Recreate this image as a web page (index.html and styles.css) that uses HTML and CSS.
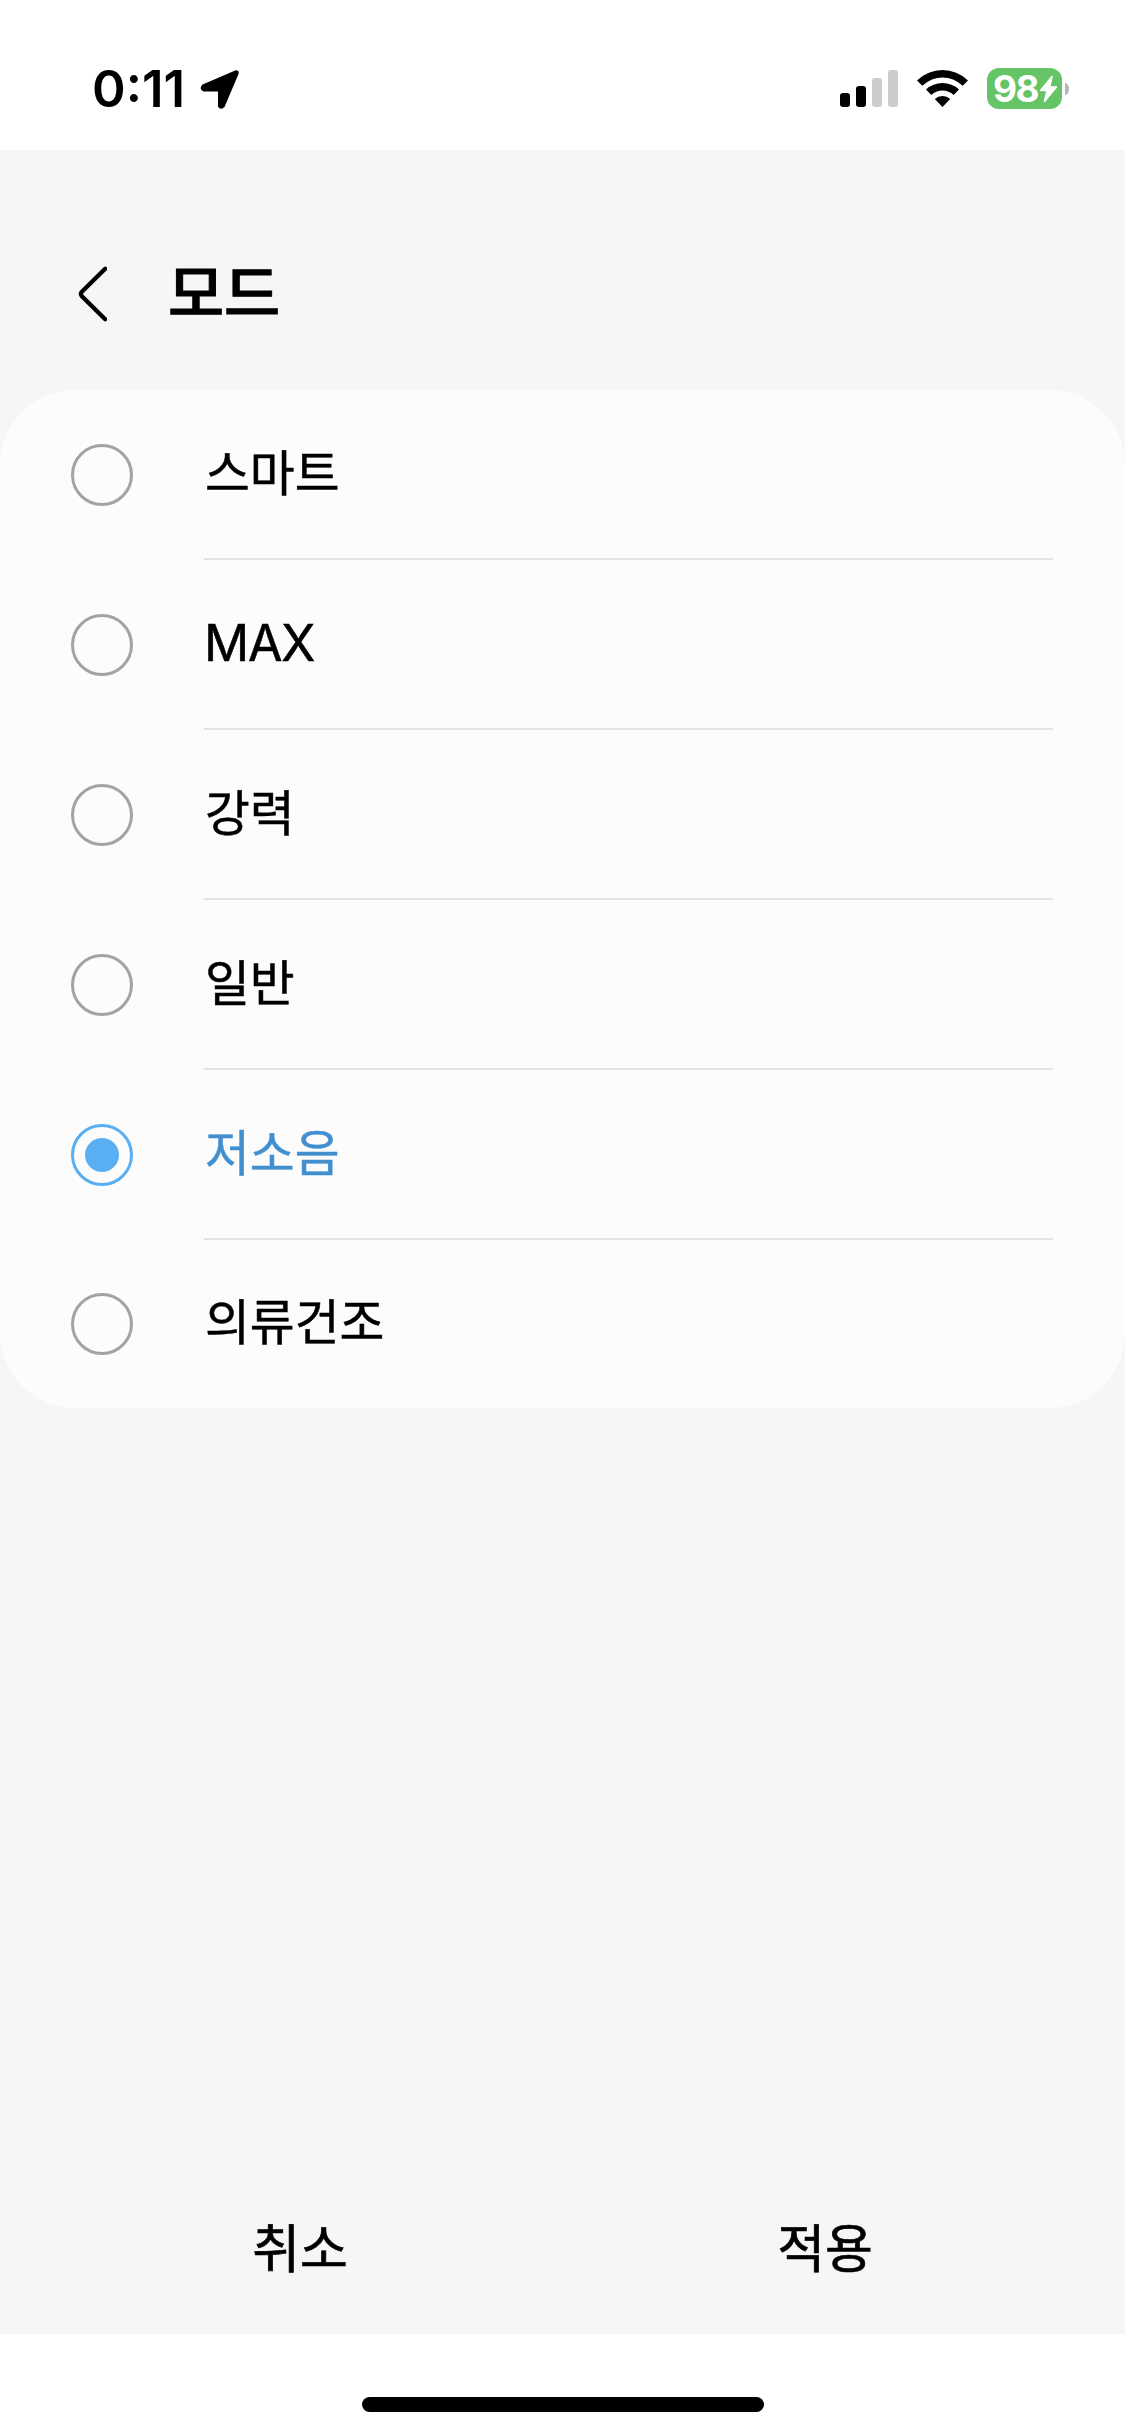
FILE: index.html
```html
<!DOCTYPE html>
<html lang="ko">
<head>
<meta charset="utf-8">
<title>모드</title>
<link rel="stylesheet" href="styles.css">
</head>
<body>
<div class="screen">
  <div class="status-bar">
    <span class="time">0:11</span>
    <svg class="location" width="40" height="40" viewBox="0 0 40 40"><path d="M3 15.500 35 1.700Q37.500.600 37.800 3L23.800 36.200Q21 39 19 36.500V20.600H4Q0 19 3 15.500Z" fill="#000" stroke="#000" stroke-width="2" stroke-linejoin="round"/></svg>
    <svg class="signal" width="58" height="37" viewBox="0 0 58 37"><rect y="23" width="10" height="14" rx="3"/><rect x="16" y="16" width="10" height="21" rx="3"/><g fill="#ccc"><rect x="32" y="8" width="10" height="29" rx="3"/><rect x="48" width="10" height="37" rx="3"/></g></svg>
    <svg class="wifi" width="51" height="37" viewBox="0 0 51 37"><path d="M0 10.500Q11 0 25.500 0T51 10.500L45.700 15.800Q36.500 7.500 25.500 7.500T5.300 15.800Z"/><path d="M9 19.500Q16 13 25.500 13T42 19.500L36.700 25Q32 20.500 25.500 20.500T14.300 25Z"/><path d="M17.800 29Q21 26 25.500 26T33.200 29L25.500 37Z"/></svg>
    <div class="battery"><span>98</span><svg width="19" height="28" viewBox="0 0 19 28"><path d="M13 1.500 1.500 15.500H8L5.500 26.500 17.500 12H10.800Z" fill="#fff" stroke="#fff" stroke-width="1.500" stroke-linejoin="round"/></svg></div>
    <div class="battery-tip"></div>
  </div>
  <main>
    <header>
      <svg class="back" width="29" height="56" viewBox="0 0 29 56"><path d="M27.200 2.800 3.900 25.700Q1.900 28 3.900 30.300L27.200 53.200" fill="none" stroke="#000" stroke-width="4.300" stroke-linecap="round"/></svg>
      <h1>모드</h1>
    </header>
    <ul class="modes">
      <li><span class="radio"></span><span class="label">스마트</span></li>
      <li><span class="radio"></span><span class="label latin">MAX</span></li>
      <li><span class="radio"></span><span class="label">강력</span></li>
      <li><span class="radio"></span><span class="label">일반</span></li>
      <li class="selected"><span class="radio"></span><span class="label">저소음</span></li>
      <li><span class="radio"></span><span class="label">의류건조</span></li>
    </ul>
    <div class="actions"><button>취소</button><button>적용</button></div>
  </main>
  <div class="home"><div class="home-bar"></div></div>
</div>
</body>
</html>
```
FILE: styles.css
```css
* { box-sizing: border-box; margin: 0; padding: 0; }
body { background: #fff; color: #000; font-family: "Noto Sans CJK KR", sans-serif; }
svg { display: block; flex: none; }
.screen { width: 1125px; height: 2436px; display: flex; flex-direction: column; overflow: hidden; }

.status-bar { height: 150px; padding: 68px 0 0 92px; display: flex; align-items: flex-start; flex: none; }
.time { width: 107px; margin-top: 1px; font: 600 51px/40px Inter, sans-serif; letter-spacing: 0; white-space: nowrap; }
.location { margin: 2px 0 0 1px; }
.signal { margin: 2px 0 0 600px; }
.wifi { margin: 2px 0 0 19px; }
.battery { width: 75px; height: 41px; margin-left: 19px; padding-left: 6px; display: flex; align-items: center; border-radius: 12px; background: #65c466; color: #fff; }
.battery span { width: 46px; font: 700 37px/41px Inter, sans-serif; letter-spacing: -1.5px; }
.battery-tip { width: 4px; height: 12px; margin: 15px 0 0 3px; border-radius: 0 4px 4px 0 / 0 6px 6px 0; background: #b5b5b5; }

main { flex: 1; display: flex; flex-direction: column; background: #f6f6f6; }
header { height: 240px; padding: 47px 0 0 78px; display: flex; align-items: center; flex: none; }
h1 { margin: 0 0 8px 61px; font-size: 61px; line-height: 80px; font-weight: 500; -webkit-text-stroke: 1px; }

.modes { list-style: none; border-radius: 75px; background: #fcfcfc; }
.modes li { height: 170px; padding-left: 71px; display: flex; align-items: center; background: linear-gradient(#e3e3e3, #e3e3e3) 204px 168px / 849px 2px no-repeat; }
.modes li:last-child { height: 168px; background: none; }
.radio { width: 62px; height: 62px; border: 3px solid #a3a3a3; border-radius: 50%; display: grid; place-items: center; }
.label { margin: 0 0 10px 72px; font-size: 48.75px; line-height: 70px; -webkit-text-stroke: 0.5px; }
.latin { margin: 0 0 4px 71px; font-family: Inter, sans-serif; font-size: 50px; letter-spacing: -1.2px; }
.selected .radio { border-color: #59aff2; }
.selected .radio::after { content: ""; width: 34px; height: 34px; border-radius: 50%; background: #59aff2; }
.selected .label { color: #428fd0; }

.actions { margin-top: auto; height: 170px; padding: 0 37.5px 6px; display: flex; }
button { flex: 1; border: 0; background: none; color: #000; font: 400 52px/80px "Noto Sans CJK KR", sans-serif; -webkit-text-stroke: 0.7px; }
.home { height: 102px; padding-top: 63px; display: flex; justify-content: center; flex: none; }
.home-bar { width: 402px; height: 15px; border-radius: 8px; background: #000; }
```
